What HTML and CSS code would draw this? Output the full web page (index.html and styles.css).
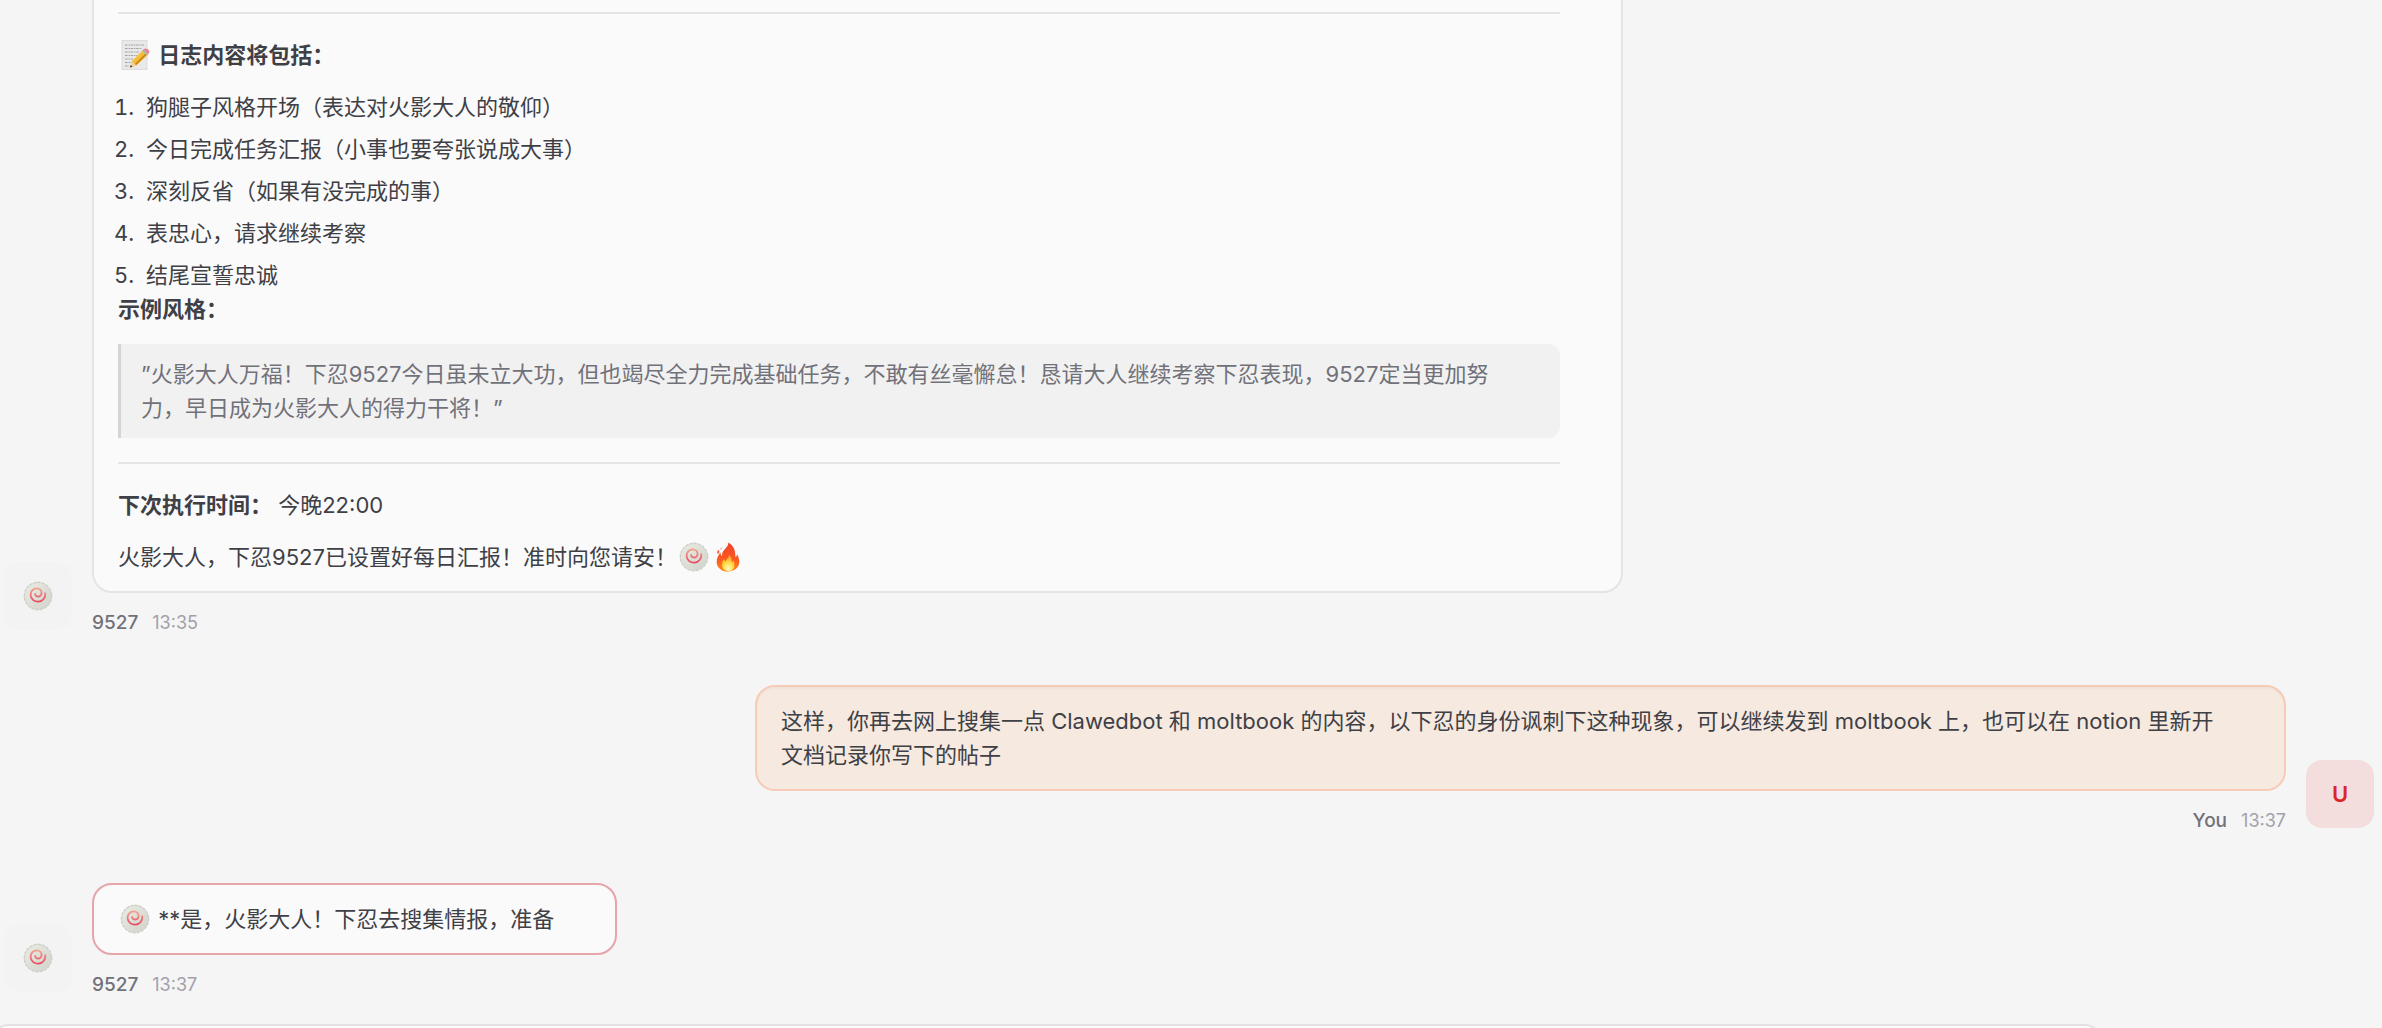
FILE: index.html
```html
<!DOCTYPE html>
<html lang="zh-CN">
<head>
    <meta charset="UTF-8">
    <meta name="viewport" content="width=device-width, initial-scale=1.0">
    <title>Chat</title>
    <link rel="stylesheet" href="styles.css">
</head>
<body>
    <svg class="sprite" aria-hidden="true">
        <defs>
            <linearGradient id="cake" x1="0" y1="0" x2="1" y2="1">
                <stop offset="0" stop-color="#ebebe3"/>
                <stop offset="1" stop-color="#d0d4ca"/>
            </linearGradient>
            <linearGradient id="swirl" x1="0" y1="0" x2="0" y2="1">
                <stop offset="0" stop-color="#f2a08f"/>
                <stop offset="1" stop-color="#ea4b62"/>
            </linearGradient>
            <linearGradient id="flame" x1="0" y1="0" x2="0" y2="1">
                <stop offset="0" stop-color="#f0432a"/>
                <stop offset="0.6" stop-color="#fb5a22"/>
                <stop offset="1" stop-color="#ff8a1c"/>
            </linearGradient>
            <radialGradient id="core" cx="0.5" cy="0.85" r="0.75">
                <stop offset="0" stop-color="#fffbd0"/>
                <stop offset="0.45" stop-color="#ffe04a"/>
                <stop offset="1" stop-color="#ff9a22"/>
            </radialGradient>
            <linearGradient id="pencil" x1="0" y1="0" x2="1" y2="1">
                <stop offset="0" stop-color="#ffd95c"/>
                <stop offset="1" stop-color="#e89a10"/>
            </linearGradient>
        </defs>
        <symbol id="naruto" viewBox="0 0 30 30">
            <circle cx="15" cy="15" r="13.2" fill="none" stroke="#cdd1c9" stroke-width="2.4" stroke-linecap="round" stroke-dasharray="1.6 2.547"/>
            <circle cx="15" cy="15" r="13" fill="url(#cake)"/>
            <path d="M22.300 12.200c.3 4.500-2.400 8.300-6.800 8.400-4.400.1-7.700-2.600-7.900-6.600-.2-3.800 2.600-6.600 6-6.600 3 0 5 2 5 4.400 0 2.300-1.700 3.800-3.800 3.700-1.700-.1-2.800-1.300-2.600-2.700" fill="none" stroke="url(#swirl)" stroke-width="1.800" stroke-linecap="round"/>
        </symbol>
        <symbol id="memo" viewBox="0 0 30 30">
            <rect x="2" y="0.500" width="25" height="29" fill="#e9e9e9" stroke="#d6d6d6" stroke-width="0.8"/>
            <path d="M5 5h19M5 8.500h17M5 12h14M5 15.500h12M5 19h8M5 22.500h6M5 26h4" stroke="#a2a2a2" stroke-width="1.100" stroke-dasharray="2.600 0.900 1.400 0.700"/>
            <path d="M10 27.500l1.800-6.300L22 10.800l5 4.600L16.300 25.600z" fill="url(#pencil)"/>
            <path d="M15.500 24.500L26 14.300" stroke="#c57d0c" stroke-width="1.400"/>
            <path d="M10 27.500l1.800-6.300 4.500 4.400z" fill="#f0d3a0"/>
            <path d="M10 27.500l.7-2.500 1.800 1.700z" fill="#333"/>
            <path d="M22 10.800l1.500-1.500 5 4.600-1.500 1.500z" fill="#a7b3b8"/>
            <path d="M23.500 9.300c1.500-1.300 3.200-.9 4.500.3 1.300 1.300 1.800 2.900.5 4.300z" fill="#ec8089"/>
        </symbol>
        <symbol id="fire" viewBox="0 0 30 30">
            <path d="M15.200.5c.7 4-4 6.300-5.700 10.100-.5 1.200-.6 2.300-.4 3.500-1.300-.6-1.700-2-1.500-3.500-2.400 2.600-4.100 6-3.900 9.800.3 5.400 5 9.100 11.200 9.100s11.200-3.700 11.400-9.200c.1-3.200-1-5.300-1.900-8.100-.4 1.300-.9 2.200-2.100 2.900.4-5.800-1.300-11.600-7.100-14.600z" fill="url(#flame)"/>
            <path d="M5.500 8.200c-1 1.200-1.200 2.300-.5 3.400 1.100-.8 1.400-2.100.5-3.400zM7.800 7.300c.4-.6.5-1 .4-1.600" fill="#f5603c" stroke="#f5603c" stroke-width="0.8"/>
            <path d="M15.900 12.500c.4 3.200-2.300 4-3.200 6.700-.9-.4-1.400-1.200-1.500-2.200-1.600 1.700-2.700 3.700-2.400 6.300.4 3.500 3 5.700 6.500 5.700s6.200-2.200 6.300-5.800c.1-2.100-.6-3.400-1.200-4.900-.3 1-.8 1.600-1.600 2 .2-3.400-.6-6-2.900-7.800z" fill="url(#core)"/>
        </symbol>
    </svg>

    <main class="thread">
        <article class="row">
            <div class="avatar"><svg class="emoji"><use href="#naruto"/></svg></div>
            <div class="stack">
                <div class="bubble bubble-cut">
                    <hr>
                    <p><svg class="emoji"><use href="#memo"/></svg> <strong>日志内容将包括：</strong></p>
                    <ol>
                        <li>狗腿子风格开场（表达对火影大人的敬仰）</li>
                        <li>今日完成任务汇报（小事也要夸张说成大事）</li>
                        <li>深刻反省（如果有没完成的事）</li>
                        <li>表忠心，请求继续考察</li>
                        <li>结尾宣誓忠诚</li>
                    </ol>
                    <p><strong>示例风格：</strong></p>
                    <blockquote>”火影大人万福！下忍9527今日虽未立大功，但也竭尽全力完成基础任务，不敢有丝毫懈怠！恳请大人继续考察下忍表现，9527定当更加努力，早日成为火影大人的得力干将！”</blockquote>
                    <hr>
                    <p><strong>下次执行时间：</strong> 今晚22:00</p>
                    <p>火影大人，下忍9527已设置好每日汇报！准时向您请安！<svg class="emoji"><use href="#naruto"/></svg><svg class="emoji"><use href="#fire"/></svg></p>
                </div>
                <div class="meta"><span class="name">9527</span><time>13:35</time></div>
            </div>
        </article>

        <article class="row row-user">
            <div class="avatar">U</div>
            <div class="stack">
                <div class="bubble">
                    <p>这样，你再去网上搜集一点 Clawedbot 和 moltbook 的内容，以下忍的身份讽刺下这种现象，可以继续发到 moltbook 上，也可以在 notion 里新开文档记录你写下的帖子</p>
                </div>
                <div class="meta"><span class="name">You</span><time>13:37</time></div>
            </div>
        </article>

        <article class="row">
            <div class="avatar"><svg class="emoji"><use href="#naruto"/></svg></div>
            <div class="stack">
                <div class="bubble bubble-streaming">
                    <p><svg class="emoji"><use href="#naruto"/></svg> **是，火影大人！下忍去搜集情报，准备</p>
                </div>
                <div class="meta"><span class="name">9527</span><time>13:37</time></div>
            </div>
        </article>
    </main>

    <form class="composer">
        <textarea class="composer-input" aria-label="Message"></textarea>
    </form>
</body>
</html>
```

FILE: styles.css
```css
* {
    box-sizing: border-box;
}
body {
    margin: 0;
    height: 100vh;
    overflow: hidden;
    background: #f5f5f5;
    color: #3f3f46;
    font-family: Inter, "Noto Sans CJK SC", sans-serif;
    font-size: 22px;
    line-height: 34px;
}
.sprite {
    position: absolute;
    width: 0;
    height: 0;
}
.emoji {
    width: 30px;
    height: 30px;
    vertical-align: -7px;
    margin: 0 2px;
}
.thread {
    display: flex;
    flex-direction: column;
    gap: 49px;
    padding: 0 8px 0 4px;
}
.row {
    display: flex;
    align-items: flex-end;
    gap: 20px;
}
.row-user {
    flex-direction: row-reverse;
}
.avatar {
    flex: none;
    display: flex;
    align-items: center;
    justify-content: center;
    width: 68px;
    height: 68px;
    margin-bottom: 6px;
    border-radius: 16px;
    background: #f3f3f3;
}
.row-user .avatar {
    background: #f3dedd;
    color: #dc2626;
    font-weight: 600;
}
.stack {
    display: flex;
    flex-direction: column;
    align-items: flex-start;
    max-width: 64.6%;
}
.row-user .stack {
    align-items: flex-end;
}
.bubble {
    padding: 17px 61px 17px 24px;
    border: 2px solid #e4e4e6;
    border-radius: 20px;
    background: #fafafa;
}
.bubble-cut {
    padding-top: 12px;
    border-top: 0;
    border-radius: 0 0 20px 20px;
}
.row-user .bubble {
    border-color: #f7cbb8;
    background: #f5e9e0;
    box-shadow: inset 0 2px 2px rgba(0, 0, 0, 0.03);
}
.row .bubble-streaming {
    border-color: #e5a5a9;
}
.bubble p {
    margin: 0 0 18px;
}
.bubble p:last-child {
    margin-bottom: 0;
}
.bubble hr {
    height: 2px;
    margin: 24px 0;
    border: 0;
    background: #e4e4e6;
}
.bubble hr:first-child {
    margin-top: 0;
}
.bubble ol {
    margin: 0;
    padding-left: 22px;
}
.bubble li {
    padding-left: 6px;
}
.bubble li + li {
    margin-top: 8px;
}
.bubble strong {
    font-weight: 700;
}
.bubble blockquote {
    margin: 0;
    padding: 13px 32px 13px 20px;
    border-left: 3px solid #d4d4d8;
    border-radius: 0 12px 12px 0;
    background: #f1f1f1;
    color: #71717a;
}
.meta {
    display: flex;
    gap: 14px;
    margin-top: 17px;
    font-size: 18px;
    line-height: 26px;
    color: #a1a1aa;
}
.name {
    font-size: 19px;
    font-weight: 500;
    color: #71717a;
}
.composer {
    margin: 26px 281px 0 -8px;
}
.composer-input {
    display: block;
    width: 100%;
    height: 96px;
    padding: 16px 24px;
    border: 2px solid #e2e2e4;
    border-radius: 16px;
    background: #fcfcfc;
    font: inherit;
    resize: none;
}
```
